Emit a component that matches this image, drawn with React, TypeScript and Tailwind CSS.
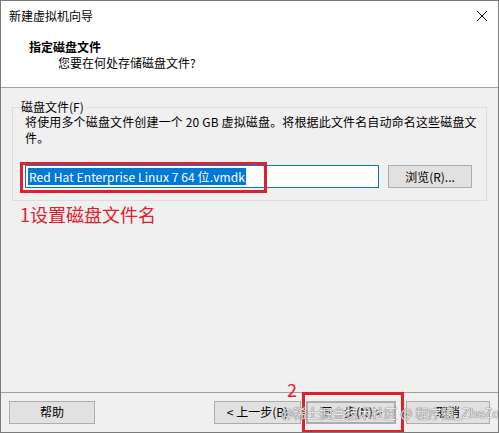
import React from 'react';

const FONT = { fontFamily: '"Segoe UI", "Noto Sans CJK SC", "Noto Sans", sans-serif' };

function WinButton({ children, className = '' }: { children: React.ReactNode; className?: string }) {
  return (
    <div
      className={`h-[23px] flex items-center justify-center bg-[#e1e1e1] border border-[#adadad] text-[12px] text-black ${className}`}
    >
      {children}
    </div>
  );
}

export default function App() {
  return (
    <div className="w-[499px] h-[433px] bg-[#f0f0f0] border border-[#7a7a7a] flex flex-col relative overflow-hidden" style={FONT}>
      {/* Title bar + header */}
      <div className="bg-white h-[87px] flex flex-col border-b border-[#a0a0a0]">
        <div className="h-[30px] flex items-center justify-between pl-[8px] pr-[6px]">
          <span className="text-[12px] text-black">新建虚拟机向导</span>
          <svg width="12" height="12" viewBox="0 0 12 12" className="mr-[4px]">
            <path d="M1 1L11 11M11 1L1 11" stroke="#000" strokeWidth="1" />
          </svg>
        </div>
        <div className="pl-[28px] pt-[8px]">
          <div className="text-[12px] font-bold text-black leading-[16px]">指定磁盘文件</div>
          <div className="text-[12px] text-black leading-[16px] pl-[29px]">您要在何处存储磁盘文件?</div>
        </div>
      </div>

      {/* Body */}
      <div className="flex-1 px-[11px] pt-[12px]">
        <div className="relative border border-[#dcdcdc] h-[94px] mt-[7px] pl-[12px] pr-[2px]">
          <span className="absolute left-[6px] -top-[9px] bg-[#f0f0f0] px-[2px] text-[12px] leading-[16px] text-black">
            磁盘文件(F)
          </span>
          <p className="text-[12px] leading-[16px] text-black pt-[6px] tracking-[0.15px]">
            将使用多个磁盘文件创建一个 20 GB 虚拟磁盘。将根据此文件名自动命名这些磁盘文件。
          </p>
          <div className="flex items-center gap-[9px] mt-[19px]">
            <div className="relative w-[354px] h-[23px] bg-white border border-[#0078d7] flex items-center pl-[2px]">
              <span className="bg-[#0078d7] text-white text-[12px] leading-[17px] px-[1px] tracking-[0.1px]">
                Red Hat Enterprise Linux 7 64 位.vmdk
              </span>
              <div className="absolute -left-[6px] -top-[4px] w-[247px] h-[31px] border-[3px] border-[#e0202a]" />
            </div>
            <WinButton className="w-[84px]">浏览(R)...</WinButton>
          </div>
        </div>
        <div className="text-[18px] leading-[24px] text-[#e0202a] pl-[8px] mt-[1px]">1设置磁盘文件名</div>
      </div>

      {/* Footer */}
      <div className="h-[40px] border-t border-[#a0a0a0] flex items-center px-[8px] pb-[1px]">
        <WinButton className="w-[86px]">帮助</WinButton>
        <div className="flex-1" />
        <WinButton className="w-[87px]">&lt; 上一步(B)</WinButton>
        <div className="relative ml-[5px]">
          <WinButton className="w-[90px] border-[#0078d7] border-2">下一步(N) &gt;</WinButton>
          <div className="absolute -left-[4px] -top-[9px] w-[102px] h-[41px] border-[3px] border-[#e0202a]" />
          <span className="absolute -left-[19px] -top-[22px] text-[18px] leading-[20px] text-[#e0202a]">2</span>
        </div>
        <WinButton className="w-[84px] ml-[10px]">取消</WinButton>
      </div>

      {/* watermark */}
      <div className="absolute left-[280px] top-[402px] text-[13px] leading-[20px] text-[#e8e8e8] [text-shadow:0_0_1px_#666,0_0_1px_#666] whitespace-nowrap pointer-events-none">
        @稀土掘金技术社区 @ 程序猿_ZheZou
      </div>
    </div>
  );
}
